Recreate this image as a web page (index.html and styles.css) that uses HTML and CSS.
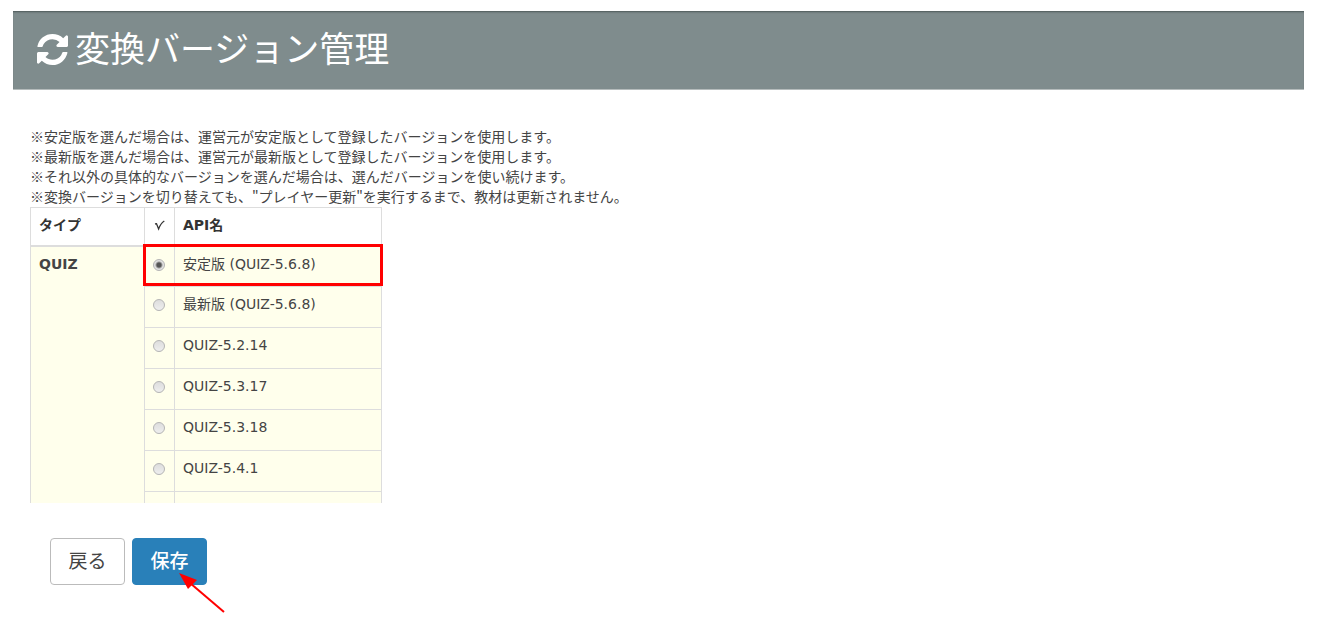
FILE: index.html
```html
<!DOCTYPE html>
<html lang="ja">
<head>
<meta charset="utf-8">
<meta name="viewport" content="width=device-width, initial-scale=1">
<title>変換バージョン管理</title>
<link rel="stylesheet" href="styles.css">
</head>
<body>
<header class="page-header">
  <svg class="refresh-icon" viewBox="0 0 1536 1536" aria-hidden="true"><path d="M1511 928q0 5-1 7-64 268-268 434.500T764 1536q-146 0-282.500-55T238 1324l-129 129q-19 19-45 19t-45-19-19-45V960q0-26 19-45t45-19h448q26 0 45 19t19 45-19 45l-137 137q71 66 161 102t187 36q134 0 250-65t186-179q11-17 53-117 8-23 30-23h192q13 0 22.500 9.500t9.500 22.500zM1536 128v448q0 26-19 45t-45 19h-448q-26 0-45-19t-19-45 19-45l138-138Q969 256 768 256q-134 0-250 65T332 500q-11 17-53 117-8 23-30 23H50q-13 0-22.500-9.500T18 608v-7q65-268 270-434.500T768 0q146 0 284 55.500T1297 212l130-129q19-19 45-19t45 19 19 45z"/></svg>
  <h1 class="page-title">変換バージョン管理</h1>
</header>
<main class="content">
  <p class="notes">※安定版を選んだ場合は、運営元が安定版として登録したバージョンを使用します。<br>※最新版を選んだ場合は、運営元が最新版として登録したバージョンを使用します。<br>※それ以外の具体的なバージョンを選んだ場合は、選んだバージョンを使い続けます。<br>※変換バージョンを切り替えても、"プレイヤー更新"を実行するまで、教材は更新されません。</p>
  <form class="version-form">
    <div class="table-view">
      <table class="versions">
        <thead>
          <tr>
            <th class="col-type" scope="col">タイプ</th>
            <th class="col-check" scope="col"><svg class="check-icon" viewBox="0 0 11 11" role="img" aria-label="選択"><path d="M1 4 2.500 3.700 4.600 9Q6.500 3.500 10.300 1"/></svg></th>
            <th class="col-name" scope="col">API名</th>
          </tr>
        </thead>
        <tbody>
          <tr>
            <th class="type" rowspan="7" scope="rowgroup">QUIZ</th>
            <td class="pick"><input class="radio" type="radio" name="version" id="v1" checked></td>
            <td><label for="v1">安定版 (QUIZ-5.6.8)</label></td>
          </tr>
          <tr><td class="pick"><input class="radio" type="radio" name="version" id="v2"></td><td><label for="v2">最新版 (QUIZ-5.6.8)</label></td></tr>
          <tr><td class="pick"><input class="radio" type="radio" name="version" id="v3"></td><td><label for="v3">QUIZ-5.2.14</label></td></tr>
          <tr><td class="pick"><input class="radio" type="radio" name="version" id="v4"></td><td><label for="v4">QUIZ-5.3.17</label></td></tr>
          <tr><td class="pick"><input class="radio" type="radio" name="version" id="v5"></td><td><label for="v5">QUIZ-5.3.18</label></td></tr>
          <tr><td class="pick"><input class="radio" type="radio" name="version" id="v6"></td><td><label for="v6">QUIZ-5.4.1</label></td></tr>
          <tr class="row-cut"><td></td><td></td></tr>
        </tbody>
      </table>
      <span class="highlight"></span>
    </div>
    <div class="actions">
      <button class="btn" type="button">戻る</button>
      <div class="save">
        <button class="btn btn-primary" type="submit">保存</button>
        <svg class="arrow" viewBox="0 0 46 41" aria-hidden="true"><path class="arrow-line" d="M11 10 45 39"/><path class="arrow-head" d="M0 0 18 7 9 16z"/></svg>
      </div>
    </div>
  </form>
</main>
</body>
</html>
```
FILE: styles.css
```css
* { box-sizing: border-box; }

body {
  margin: 0;
  background: #fff;
  color: #444;
  font-family: "DejaVu Sans", "Noto Sans CJK JP", sans-serif;
  font-size: 14px;
  line-height: 20px;
}

.page-header {
  display: flex;
  align-items: center;
  gap: 7px;
  margin: 11px 18px 0 13px;
  padding: 10px 24px 16px;
  background: #7f8c8d;
  border-bottom: 1px solid #b5bcbc;
  box-shadow: inset 0 2px 2px -1px #4d5858;
  color: #fff;
}

.refresh-icon {
  width: 31px;
  height: 31px;
  margin-top: 4px;
  fill: currentColor;
}

.page-title {
  margin: 0;
  font-family: "Noto Sans CJK JP", sans-serif;
  font-size: 35px;
  font-weight: 400;
  line-height: 52px;
}

.content { padding: 36px 30px 0; }

.notes {
  margin: 0;
  padding-bottom: 1px;
  font-family: "Noto Sans CJK JP", sans-serif;
}

.table-view {
  position: relative;
  width: 352px;
}

.versions {
  width: 100%;
  table-layout: fixed;
  border-collapse: collapse;
}

.versions th,
.versions td {
  padding: 7px 8px;
  border: 1px solid #ddd;
  text-align: left;
  vertical-align: top;
}

.versions thead th {
  height: 38px;
  border-bottom-width: 2px;
  color: #333;
}

.versions .col-type { width: 114px; }
.versions .col-check { width: 30px; }

.versions tbody th,
.versions tbody td {
  height: 41px;
  background: #ffffec;
}

.versions tbody .type,
.versions .row-cut td { border-bottom: 0; }

.versions .row-cut td {
  height: 11px;
  padding: 0;
}

.check-icon {
  display: block;
  width: 11px;
  height: 11px;
  margin: 5px auto 0;
  fill: none;
  stroke: #333;
  stroke-width: 1.3;
}

.versions .pick { padding: 12px 9px 12px 7px; }

.radio {
  appearance: none;
  display: block;
  width: 12px;
  height: 12px;
  margin: 0 auto;
  border: 1px solid #b5b5b5;
  border-radius: 50%;
  background: linear-gradient(#ddd, #eee);
}

.radio:checked { background: radial-gradient(circle, #555 0 2px, #e2e2e2 4px); }

.highlight {
  position: absolute;
  top: 37px;
  right: -1px;
  left: 113px;
  height: 42px;
  border: 3px solid #f00;
  pointer-events: none;
}

.actions {
  display: flex;
  gap: 7px;
  padding: 35px 20px;
}

.btn {
  min-width: 75px;
  padding: 7px 16px 11px;
  border: 1px solid #bbb;
  border-radius: 4px;
  background: #fff;
  color: #444;
  font-family: "Noto Sans CJK JP", sans-serif;
  font-size: 19px;
  line-height: 27px;
}

.btn-primary {
  border-color: #2980b9;
  background: #2980b9;
  color: #fff;
  font-weight: 500;
}

.save { position: relative; }

.arrow {
  position: absolute;
  top: 35px;
  left: 47px;
  width: 46px;
  height: 41px;
  pointer-events: none;
}

.arrow-line { stroke: #f00; stroke-width: 2; }
.arrow-head { fill: #f00; }
```
